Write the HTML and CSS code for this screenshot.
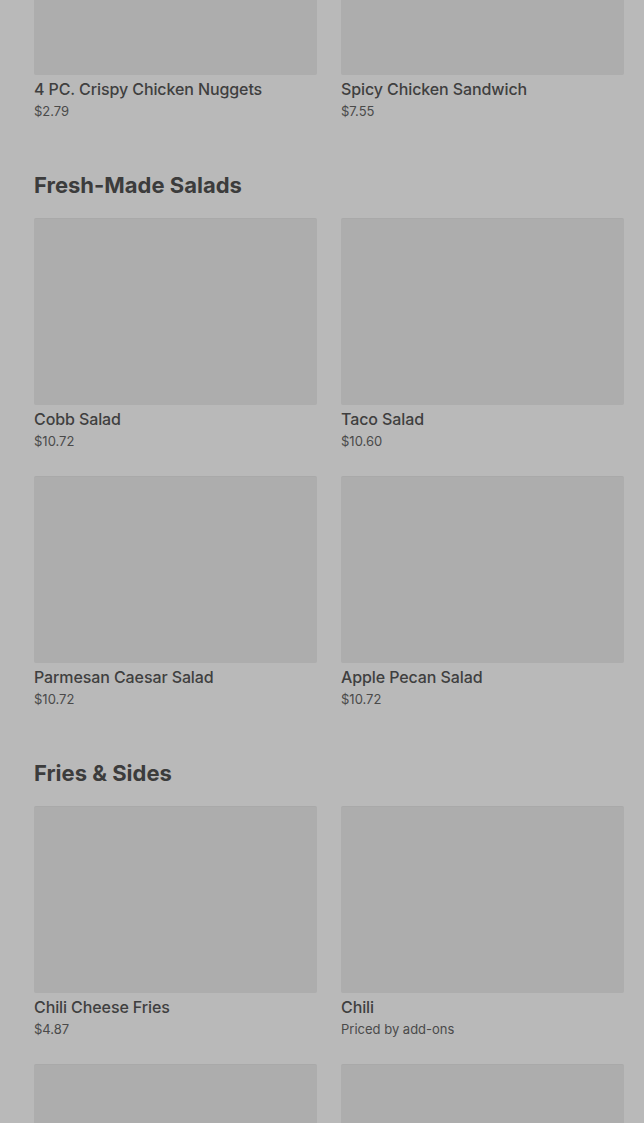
FILE: index.html
```html
<!DOCTYPE html>
<html>
<head>
<meta charset="utf-8">
<link rel="stylesheet" href="styles.css">
</head>
<body>
<div class="page">
  <section class="section first">
    <div class="grid">
      <div class="card"><div class="thumb"></div><div class="name">4 PC. Crispy Chicken Nuggets</div><div class="price">$2.79</div></div>
      <div class="card"><div class="thumb"></div><div class="name">Spicy Chicken Sandwich</div><div class="price">$7.55</div></div>
    </div>
  </section>
  <section class="section">
    <h2 class="heading">Fresh-Made Salads</h2>
    <div class="grid">
      <div class="card"><div class="thumb"></div><div class="name">Cobb Salad</div><div class="price">$10.72</div></div>
      <div class="card"><div class="thumb"></div><div class="name">Taco Salad</div><div class="price">$10.60</div></div>
      <div class="card"><div class="thumb"></div><div class="name">Parmesan Caesar Salad</div><div class="price">$10.72</div></div>
      <div class="card"><div class="thumb"></div><div class="name">Apple Pecan Salad</div><div class="price">$10.72</div></div>
    </div>
  </section>
  <section class="section">
    <h2 class="heading">Fries &amp; Sides</h2>
    <div class="grid">
      <div class="card"><div class="thumb"></div><div class="name">Chili Cheese Fries</div><div class="price">$4.87</div></div>
      <div class="card"><div class="thumb"></div><div class="name">Chili</div><div class="price">Priced by add-ons</div></div>
      <div class="card"><div class="thumb"></div></div>
      <div class="card"><div class="thumb"></div></div>
    </div>
  </section>
</div>
</body>
</html>
```
FILE: styles.css
```css
html, body {
  margin: 0;
  padding: 0;
  background: #b9b9b9;
  overflow: hidden;
}
body {
  font-family: Inter, "Liberation Sans", sans-serif;
  color: #3e3e3e;
}
.page {
  margin-top: -112px;
  padding: 0 20px 0 34px;
  display: flex;
  flex-direction: column;
  gap: 51px;
}
.heading {
  margin: 0 0 19px;
  font-size: 22px;
  line-height: 28px;
  font-weight: 700;
  letter-spacing: 0;
  color: #3c3c3c;
}
.grid {
  display: grid;
  grid-template-columns: 283px 283px;
  column-gap: 24px;
  row-gap: 26px;
}
.thumb {
  height: 187px;
  background: #adadad;
  border-top: 1px solid #a9a9a9;
  box-sizing: border-box;
  border-radius: 2px;
}
.name {
  margin-top: 4px;
  font-size: 16px;
  line-height: 20px;
  font-weight: 500;
  letter-spacing: -0.1px;
  color: #3f3f3f;
}
.price {
  margin-top: 3px;
  font-size: 13px;
  line-height: 18px;
  color: #4a4a4a;
  letter-spacing: 0;
}
```
